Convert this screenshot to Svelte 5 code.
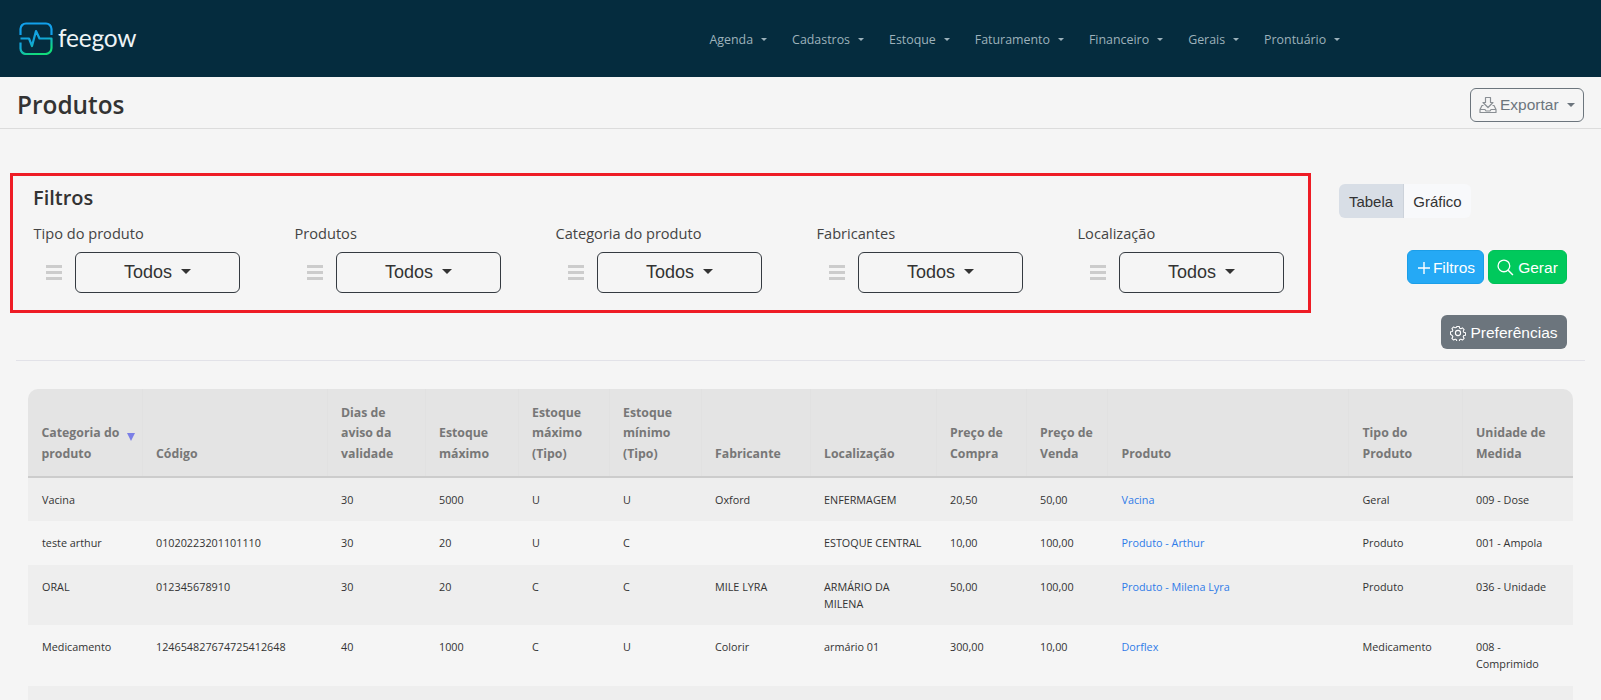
<script>
  const menu = ['Agenda', 'Cadastros', 'Estoque', 'Faturamento', 'Financeiro', 'Gerais', 'Prontuário'];
  const filters = ['Tipo do produto', 'Produtos', 'Categoria do produto', 'Fabricantes', 'Localização'];
  const widths = [114, 185, 98, 93, 91, 92, 109, 126, 90, 81.5, 241, 113.5, 111];
  const heads = [
    'Categoria do produto', 'Código', 'Dias de aviso da validade', 'Estoque máximo',
    'Estoque máximo (Tipo)', 'Estoque mínimo (Tipo)', 'Fabricante', 'Localização',
    'Preço de Compra', 'Preço de Venda', 'Produto', 'Tipo do Produto', 'Unidade de Medida'
  ];
  const rows = [
    ['Vacina', '', '30', '5000', 'U', 'U', 'Oxford', 'ENFERMAGEM', '20,50', '50,00', 'Vacina', 'Geral', '009 - Dose'],
    ['teste arthur', '01020223201101110', '30', '20', 'U', 'C', '', 'ESTOQUE CENTRAL', '10,00', '100,00', 'Produto - Arthur', 'Produto', '001 - Ampola'],
    ['ORAL', '012345678910', '30', '20', 'C', 'C', 'MILE LYRA', 'ARMÁRIO DA MILENA', '50,00', '100,00', 'Produto - Milena Lyra', 'Produto', '036 - Unidade'],
    ['Medicamento', '124654827674725412648', '40', '1000', 'C', 'U', 'Colorir', 'armário 01', '300,00', '10,00', 'Dorflex', 'Medicamento', '008 - Comprimido']
  ];
</script>

<div class="page">
  <header class="nav">
    <div class="brand">
      <svg class="mark" width="34" height="33" viewBox="0 0 34 33" fill="none">
        <defs>
          <linearGradient id="lg" x1="0" y1="0" x2="0.5" y2="1">
            <stop offset="0" stop-color="#14a3e8" />
            <stop offset="0.55" stop-color="#12a5d8" />
            <stop offset="1" stop-color="#12dc7c" />
          </linearGradient>
        </defs>
        <path d="M1.5 13V7a5.5 5.5 0 0 1 5.5-5.5h20A5.5 5.5 0 0 1 32.5 7v6" stroke="#12a0ea" stroke-width="2.2" />
        <path d="M1.5 16.5H10l3 7.500 4-15 3.500 7.500h12v9.500a6 6 0 0 1-6 6H7a5.500 5.500 0 0 1-5.500-5.500V20.500" stroke="url(#lg)" stroke-width="2.200" stroke-linejoin="round" />
      </svg>
      <span class="word">feegow</span>
    </div>
    <nav class="menu">
      {#each menu as item}
        <span class="menu-item">{item}<i class="caret small"></i></span>
      {/each}
    </nav>
  </header>

  <div class="head">
    <h1>Produtos</h1>
    <button class="btn export">
      <svg width="18" height="18" viewBox="0 0 18 18" fill="none" stroke="#8a8f94" stroke-width="1.200" stroke-linejoin="round">
        <path d="M6.500 1.500h5v5h2.500L9 11.500 4 6.500h2.500z" />
        <path d="M4.500 9.500H3l-2 4v3h16v-3l-2-4h-1.500" />
        <path d="M1 13.500h5l1 1.500h4l1-1.500h5" />
      </svg>
      Exportar<i class="caret"></i>
    </button>
  </div>

  <div class="workspace">
    <section class="filters">
      <h2>Filtros</h2>
      <div class="filter-grid">
        {#each filters as label}
          <div class="filter">
            <div class="filter-label">{label}</div>
            <div class="filter-row">
              <span class="grip"><b></b><b></b><b></b></span>
              <button class="btn select">Todos<i class="caret dark"></i></button>
            </div>
          </div>
        {/each}
      </div>
    </section>

    <aside class="side">
      <div class="toggle">
        <span class="seg on">Tabela</span><span class="seg">Gráfico</span>
      </div>
      <div class="actions">
        <button class="btn blue">
          <svg width="16" height="16" viewBox="0 0 16 16" fill="none" stroke="#fff" stroke-width="1.400"><path d="M8 2v12M2 8h12" /></svg>
          Filtros
        </button>
        <button class="btn green">
          <svg width="17" height="17" viewBox="0 0 16 16" fill="none" stroke="#fff" stroke-width="1.200"><circle cx="6.500" cy="6.500" r="5.500" /><path d="M10.500 10.500L15 15" stroke-width="1.400" /></svg>
          Gerar
        </button>
      </div>
      <button class="btn grey">
        <svg width="16" height="16" viewBox="0 0 16 16" fill="none" stroke="#fff" stroke-width="1.100" stroke-linejoin="round">
          <circle cx="8" cy="8" r="2.600" />
          <path d="M6.700 1h2.600l.4 1.900 1.300.6 1.700-1 1.800 1.800-1 1.700.6 1.300 1.900.4v2.600l-1.900.4-.6 1.300 1 1.700-1.800 1.800-1.700-1-1.300.6-.4 1.900H6.700l-.4-1.900-1.300-.6-1.700 1-1.800-1.800 1-1.700-.6-1.300L0 9.300V6.700l1.900-.4.6-1.300-1-1.700 1.800-1.800 1.700 1 1.300-.6z" transform="translate(.5 .5) scale(.94)" />
        </svg>
        Preferências
      </button>
    </aside>
  </div>

  <hr class="rule" />

  <div class="table-wrap">
    <table>
      <colgroup>
        {#each widths as w}<col style="width:{w}px" />{/each}
      </colgroup>
      <thead>
        <tr>
          {#each heads as h, i}
            <th>{h}{#if i === 0}<span class="sort"></span>{/if}</th>
          {/each}
        </tr>
      </thead>
      <tbody>
        {#each rows as row}
          <tr>
            {#each row as cell, i}
              <td class:link={i === 10}>{cell}</td>
            {/each}
          </tr>
        {/each}
        <tr class="empty"><td colspan="13"></td></tr>
      </tbody>
    </table>
  </div>
</div>

<style>
  :global(body) { margin: 0; background: #f5f5f5; }
  .page {
    height: 100vh;
    overflow: hidden;
    background: #f5f5f5;
    font-family: "Open Sans", sans-serif;
    color: #333;
  }
  .nav {
    height: 77px;
    background: #052c3e;
    display: flex;
    align-items: center;
    box-sizing: border-box;
    padding-left: 19px;
  }
  .brand { display: flex; align-items: center; width: 690.500px; }
  .mark { display: block; }
  .word {
    font-family: "Lato", sans-serif;
    font-weight: 400;
    font-size: 24.500px;
    letter-spacing: -.2px;
    color: #eef3f5;
    margin-left: 5px;
    position: relative;
    top: -1px;
  }
  .menu { display: flex; align-items: center; position: relative; top: 1px; }
  .menu-item {
    font-size: 12.400px;
    color: #9db2bb;
    margin-right: 25px;
    display: flex;
    align-items: center;
    white-space: nowrap;
  }
  .caret {
    display: inline-block;
    width: 0;
    height: 0;
    border-left: 4px solid transparent;
    border-right: 4px solid transparent;
    border-top: 4.500px solid #6c757d;
    margin-left: 5px;
  }
  .caret.small {
    border-left-width: 3.500px;
    border-right-width: 3.500px;
    border-top: 3.500px solid #9db2bb;
    margin-left: 8px;
  }
  .caret.dark { border-top-color: #333; border-left-width: 5.500px; border-right-width: 5.500px; border-top-width: 5.500px; margin-left: 9px; position: relative; top: -1px; }
  .head {
    height: 52px;
    box-sizing: border-box;
    border-bottom: 1px solid #dcdcdc;
    display: flex;
    align-items: center;
    justify-content: space-between;
    padding: 0 17px;
  }
  h1 {
    margin: 0;
    font-size: 24.400px;
    font-weight: 600;
    color: #333;
    line-height: 1;
    position: relative;
    top: 3px;
  }
  .btn {
    font-family: "Liberation Sans", Arial, sans-serif;
    font-size: 15.500px;
    height: 34px;
    box-sizing: border-box;
    border-radius: 6px;
    border: 1px solid transparent;
    display: inline-flex;
    align-items: center;
    justify-content: center;
    gap: 3px;
    padding: 0;
    color: #fff;
    background: none;
  }
  .export {
    width: 114px;
    border-color: #6c757d;
    color: #6c757d;
    margin-top: 4px;
    justify-content: flex-start;
    padding-left: 8px;
  }
  .workspace {
    display: flex;
    padding: 44px 0 0 10px;
  }
  .filters {
    width: 1301px;
    height: 140px;
    box-sizing: border-box;
    border: 3px solid #ee1c25;
    padding: 8px 20px 0;
  }
  h2 {
    margin: 0 0 12px;
    font-size: 20px;
    font-weight: 600;
    line-height: 27px;
    color: #333;
  }
  .filter-grid { display: grid; grid-template-columns: repeat(5, 261px); }
  .filter-label {
    font-family: "Open Sans", sans-serif;
    font-size: 14.600px;
    color: #444;
    line-height: 20px;
    margin-bottom: 9px;
    padding-left: .5px;
  }
  .filter-row { display: flex; align-items: center; padding-left: 13px; gap: 13px; }
  .grip { display: flex; flex-direction: column; gap: 3px; width: 16px; }
  .grip b { display: block; height: 3px; background: #ccc; }
  .select {
    width: 165px;
    height: 41px;
    border-color: #343a40;
    color: #333;
    font-size: 18px;
    gap: 0;
  }
  .side {
    margin-left: 28px;
    margin-top: 11px;
    width: 228px;
    display: flex;
    flex-direction: column;
    align-items: flex-end;
  }
  .toggle { align-self: flex-start; display: flex; height: 34px; border-radius: 6px; overflow: hidden; font-family: "Liberation Sans", Arial, sans-serif; font-size: 15px; color: #333; }
  .seg { display: flex; align-items: center; justify-content: center; width: 67px; background: #f8f9fb; }
  .seg.on { width: 65px; background: #d8dee6; border-right: 1px solid #ccd2da; box-sizing: border-box; }
  .actions { display: flex; gap: 4px; margin-top: 32px; }
  .blue { width: 77px; background: #25a9f5; border-color: #1b9ee8; gap: 1px; padding-top: 1px; }
  .green { width: 79px; background: #00c95c; border-color: #00c058; gap: 4px; padding-top: 1px; }
  .grey { width: 126px; background: #6c757d; margin-top: 31px; gap: 4px; padding-top: 1px; }
  .rule {
    border: 0;
    border-top: 1px solid #e2e2e8;
    margin: 11px 16px 0 16px;
  }
  .table-wrap {
    margin: 28px 0 0 28px;
    width: 1545px;
    border-radius: 10px 10px 0 0;
    overflow: hidden;
  }
  table {
    border-collapse: collapse;
    table-layout: fixed;
    width: 1545px;
  }
  th {
    background: #e4e4e4;
    color: #777;
    font-size: 12.300px;
    font-weight: 700;
    line-height: 20.400px;
    text-align: left;
    vertical-align: bottom;
    padding: 14px 6px 12px 13.500px;
    border-bottom: 2px solid #ccc;
    border-right: 1px solid #e1e1e1;
    position: relative;
  }
  th:last-child { border-right: 0; }
  td {
    font-size: 10.800px;
    line-height: 17.250px;
    padding: 13px 6px 13px 14px;
    vertical-align: top;
    color: #333;
    overflow-wrap: break-word;
  }
  td:last-child { padding-right: 14px; }
  .empty td { height: 40px; }
  tbody tr:nth-child(odd) td { background: #eee; }
  tbody tr:nth-child(even) td { background: #f5f5f5; }
  td.link { color: #2f7be8; }
  .sort {
    position: absolute;
    left: 99px;
    top: 44px;
    width: 0;
    height: 0;
    border-left: 4.500px solid transparent;
    border-right: 4.500px solid transparent;
    border-top: 8px solid #7b7fe6;
  }
</style>
